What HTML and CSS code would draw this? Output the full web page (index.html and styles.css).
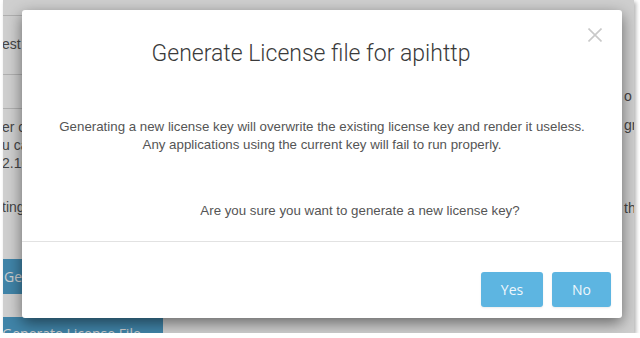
FILE: index.html
```html
<!DOCTYPE html>
<html>
<head>
<meta charset="utf-8">
<link rel="stylesheet" href="styles.css">
</head>
<body>
<div class="frame">
  <div class="page">
    <div class="left-col">
      <div class="topbar"></div>
      <div class="row row-first">est</div>
      <div class="row row-second"></div>
      <div class="para">
        <div>er ca</div>
        <div>u can</div>
        <div>2.168</div>
      </div>
      <div class="para para-gap">ting</div>
      <div class="btn-bg">Generate</div>
      <div class="bar-bg">Generate License File</div>
    </div>
    <div class="right-col">
      <div class="rline rline-1">o S</div>
      <div class="rline rline-2">gni</div>
      <div class="rline rline-3">the</div>
    </div>
  </div>
  <div class="overlay"></div>
  <div class="modal">
    <div class="modal-header">
      <div class="modal-title">Generate License file for apihttp</div>
      <div class="close">
        <svg width="14" height="14" viewBox="0 0 14 14"><path d="M0.5 0.5L13.5 13.5M13.5 0.5L0.5 13.5" stroke="#c9c9c9" stroke-width="1.6" fill="none"/></svg>
      </div>
    </div>
    <div class="modal-body">
      <p class="msg">Generating a new license key will overwrite the existing license key and render it useless.<br>Any applications using the current key will fail to run properly.</p>
      <p class="question">Are you sure you want to generate a new license key?</p>
    </div>
    <div class="modal-footer">
      <button class="btn btn-yes">Yes</button>
      <button class="btn btn-no">No</button>
    </div>
  </div>
</div>
</body>
</html>
```

FILE: styles.css
```css
html, body {
  margin: 0;
  padding: 0;
  background: #ffffff;
}

.frame {
  position: relative;
  margin-left: 3px;
  width: 631px;
  height: 333px;
  overflow: hidden;
  background: #ffffff;
  box-shadow: 2px 2px 4px rgba(0, 0, 0, 0.3);
  font-family: "Liberation Sans", Arial, sans-serif;
}

.page {
  display: flex;
  justify-content: space-between;
  height: 100%;
}

.left-col {
  width: 300px;
  margin-left: -1px;
  font-size: 14px;
  color: #555;
}

.topbar {
  height: 15px;
  border-bottom: 1px solid #d8d8d8;
}

.row {
  border-bottom: 1px solid #d8d8d8;
  line-height: 20px;
  white-space: nowrap;
}

.row-first {
  height: 40px;
  padding-top: 18px;
}

.row-second {
  height: 33px;
}

.para {
  margin-top: 9px;
  line-height: 18px;
  white-space: nowrap;
}

.para-gap {
  margin-top: 26px;
}

.btn-bg {
  margin-top: 43px;
  margin-left: -10px;
  width: 120px;
  height: 35px;
  line-height: 35px;
  background: #4fa3cf;
  color: #ffffff;
  font-family: "Open Sans", sans-serif;
  font-size: 14px;
  padding-left: 12px;
}

.bar-bg {
  margin-top: 23px;
  width: 161px;
  height: 30px;
  line-height: 30px;
  background: #4fa3cf;
  color: #ffffff;
  font-family: "Open Sans", sans-serif;
  font-size: 14px;
  padding-top: 2px;
  white-space: nowrap;
}

.right-col {
  width: 10px;
  font-size: 14px;
  color: #555;
  white-space: nowrap;
  line-height: 18px;
}

.rline-1 { margin-top: 87px; }
.rline-2 { margin-top: 11px; }
.rline-3 { margin-top: 65px; }

.overlay {
  position: absolute;
  inset: 0;
  background: rgba(0, 0, 0, 0.19);
}

.modal {
  position: absolute;
  left: 19px;
  top: 10px;
  width: 600px;
  height: 308px;
  background: #ffffff;
  border-radius: 3px;
  box-shadow: 0 5px 15px rgba(0, 0, 0, 0.5);
  display: flex;
  flex-direction: column;
}

.modal-header {
  display: flex;
  align-items: flex-start;
  padding: 18px 20px 0 20px;
}

.modal-title {
  flex: 1;
  margin-top: 12px;
  text-align: center;
  font-family: Roboto, "Liberation Sans", sans-serif;
  font-weight: 300;
  font-size: 23px;
  line-height: 27px;
  color: #3a3a3a;
}

.close {
  width: 22px;
  height: 14px;
  display: flex;
  justify-content: flex-end;
}

.close svg {
  display: block;
}

.modal-body {
  padding: 51px 0 21px 0;
  border-bottom: 1px solid #e2e2e2;
  font-size: 13.3px;
  line-height: 18px;
  color: #555;
  text-align: center;
}

.msg {
  margin: 0;
}

.question {
  margin: 48px 0 0 0;
  padding-left: 76px;
}

.modal-footer {
  display: flex;
  justify-content: flex-end;
  gap: 9px;
  padding: 30px 11px 11px 11px;
}

.btn {
  height: 35px;
  border: none;
  border-radius: 3px;
  background: #5db5e1;
  color: #eef7fc;
  font-family: "Open Sans", sans-serif;
  font-size: 14px;
  padding: 0;
  box-shadow: 0 1px 2px rgba(0, 0, 0, 0.08);
}

.btn-yes { width: 62px; }
.btn-no { width: 59px; }
```
